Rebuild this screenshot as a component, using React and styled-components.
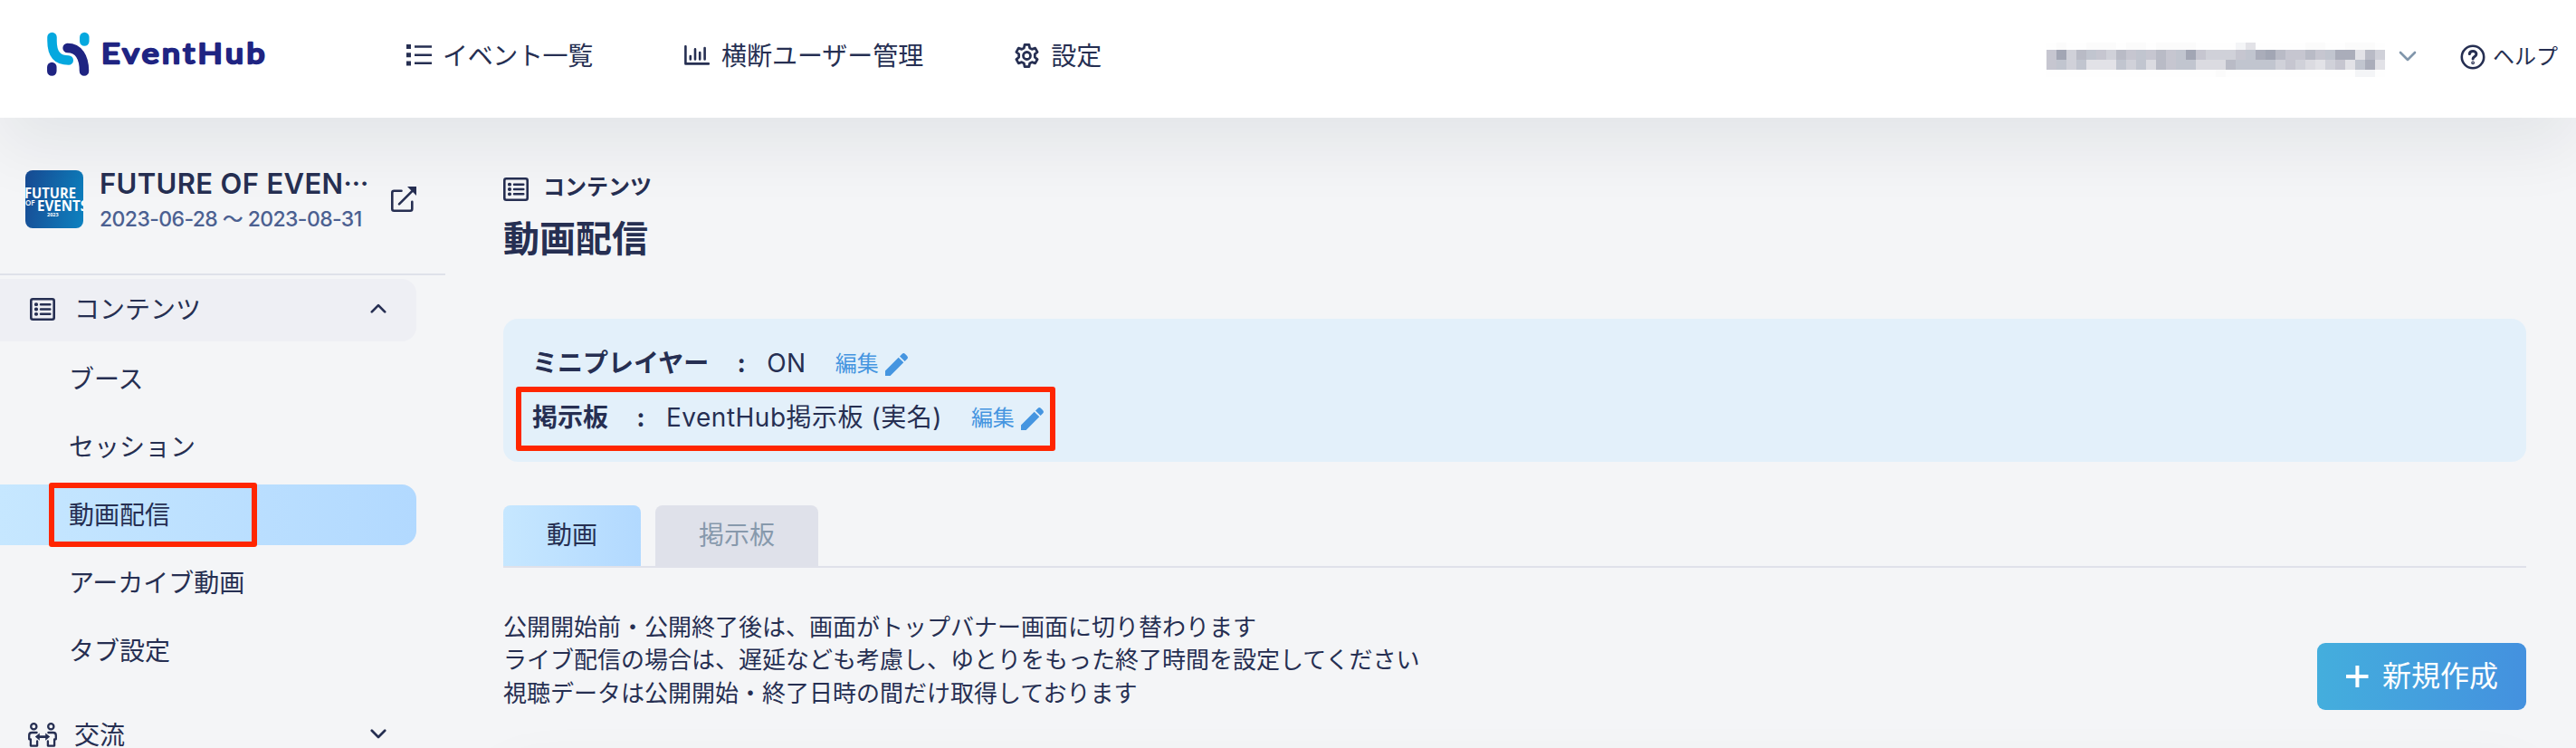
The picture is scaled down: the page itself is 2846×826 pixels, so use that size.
import React from "react";
import styled, { createGlobalStyle } from "styled-components";

const navy = "#262f52";
const line = "#dfe1ea";

const GlobalStyle = createGlobalStyle`
  *, *::before, *::after { box-sizing: border-box; }
  body {
    margin: 0;
    background: #f4f5f7;
    color: ${navy};
    font-family: Inter, "Noto Sans CJK JP", sans-serif;
    font-size: 28px;
    line-height: 1.4;
    overflow: hidden;
  }
  svg { display: block; flex: none; }
`;

const Page = styled.div`
  width: 100%;
  height: 826px;
  overflow: hidden;
`;

const Header = styled.header`
  position: relative;
  display: flex;
  align-items: center;
  height: 130px;
  padding: 0 20px 5px 52px;
  background: #fff;
  box-shadow: 0 32px 72px rgba(20, 24, 40, 0.07);
`;

const Nav = styled.nav`
  display: flex;
  align-items: center;
  margin-left: 152px;
`;

const NavItem = styled.a`
  display: flex;
  align-items: center;
  gap: ${(p) => p.$gap}px;
  margin-right: ${(p) => p.$after || 0}px;
  letter-spacing: ${(p) => p.$tracking || 0}px;
  white-space: nowrap;

  svg { margin-top: -3px; }
`;

const Account = styled.div`
  display: flex;
  align-items: center;
  gap: 16px;
  margin-left: auto;
`;

const Redacted = styled.div`
  margin: 7px -1px 0 0;
`;

const Help = styled.a`
  display: flex;
  align-items: center;
  gap: 8px;
  width: 108px;
  margin-left: 32px;
  font-size: 24px;
  white-space: nowrap;
`;

const Body = styled.div`
  display: flex;
`;

const Sidebar = styled.aside`
  width: 492px;
  flex: none;
`;

const EventCard = styled.div`
  display: flex;
  height: 174px;
  padding: 58px 32px 0 28px;
  border-bottom: 2px solid ${line};
`;

const Thumb = styled.div`
  width: 64px;
  height: 64px;
  border-radius: 8px;
  overflow: hidden;
  background: linear-gradient(100deg, #184a93, #0d82c0);
`;

const EventInfo = styled.div`
  width: 310px;
  margin-left: 18px;
  margin-right: 12px;
`;

const EventTitle = styled.div`
  font-size: 31px;
  font-weight: 600;
  line-height: 36px;
  margin-top: -3px;
  letter-spacing: 0.35px;
  white-space: nowrap;
`;

const Ellipsis = styled.span`
  font-size: 29px;
  line-height: 0;
  vertical-align: 9px;
`;

const EventDate = styled.div`
  margin-top: 5px;
  color: #4b6091;
  font-size: 23px;
  font-weight: 500;
  line-height: 32px;
  letter-spacing: -0.6px;
  white-space: nowrap;
`;

const OpenLink = styled.a`
  padding-top: 18px;
`;

const MenuGroup = styled.div`
  display: flex;
  align-items: center;
  width: 460px;
  height: 69px;
  margin-top: ${(p) => p.$top}px;
  padding: 0 33px 0 ${(p) => p.$left}px;
  border-radius: 0 16px 16px 0;
  background: ${(p) => (p.$open ? "#eeeff4" : "transparent")};

  svg { margin-top: -3px; }
`;

const MenuLabel = styled.span`
  flex: 1;
  margin-left: ${(p) => p.$gap}px;
  padding-top: 1px;
`;

const SubMenu = styled.div`
  display: flex;
  flex-direction: column;
  gap: 8px;
  padding-top: 8px;
`;

const SubItem = styled.a`
  position: relative;
  display: flex;
  align-items: center;
  width: 460px;
  height: 67px;
  padding: 3px 0 0 76px;
  border-radius: 0 16px 16px 0;
  background: ${(p) => (p.$active ? "linear-gradient(90deg, #c6e7ff, #b2d9ff)" : "none")};
`;

const Marker = styled.div`
  position: absolute;
  left: ${(p) => p.$x}px;
  top: ${(p) => p.$y}px;
  width: ${(p) => p.$w}px;
  height: ${(p) => p.$h}px;
  border: 6px solid #ff2600;
  border-radius: 3px;
`;

const Main = styled.main`
  flex: 1;
  padding: 58px 55px 0 64px;
`;

const Crumb = styled.div`
  display: flex;
  align-items: center;
  gap: 16px;
  height: 42px;
  font-size: 24px;
  font-weight: 600;
`;

const CrumbText = styled.span`
  margin-top: -4px;
`;

const PageTitle = styled.h1`
  margin: 6px 0 0;
  font-size: 40px;
  font-weight: 700;
  line-height: 56px;
`;

const Settings = styled.section`
  position: relative;
  height: 158px;
  margin-top: 60px;
  padding: 20px 32px 0;
  border-radius: 16px;
  background: #e3f0fa;
`;

const SettingRow = styled.div`
  display: flex;
  align-items: center;
  height: 60px;
  white-space: nowrap;
`;

const SettingName = styled.strong`
  font-weight: 700;
`;

const Colon = styled.strong`
  width: 64px;
  padding-left: 8px;
  text-align: center;
`;

const SettingValue = styled.span`
  letter-spacing: 0.5px;
`;

const EditLink = styled.a`
  display: flex;
  align-items: center;
  gap: 7px;
  margin-left: 32px;
  color: #4595e0;
  font-size: 24px;
`;

const Tabs = styled.div`
  display: flex;
  gap: 16px;
  margin-top: 48px;
  border-bottom: 2px solid ${line};
`;

const Tab = styled.a`
  display: flex;
  align-items: center;
  height: 67px;
  padding: 1px 48px 0;
  border-radius: 8px 8px 0 0;
  color: ${(p) => (p.$active ? navy : "#8799ac")};
  background: ${(p) => (p.$active ? "linear-gradient(90deg, #c6e7ff, #b2d9ff)" : line)};
`;

const Intro = styled.div`
  display: flex;
  justify-content: space-between;
  height: 110px;
  margin-top: 48px;
`;

const Note = styled.p`
  margin: 0;
  font-size: 26px;
  line-height: 36.4px;
`;

const CreateButton = styled.button`
  display: flex;
  align-items: center;
  gap: 15px;
  width: 231px;
  height: 74px;
  margin-top: 35px;
  padding: 0 0 0 32px;
  border: 0;
  border-radius: 9px;
  background: linear-gradient(90deg, #44aedd, #4491df);
  color: #fff;
  font: inherit;
  font-size: 32px;
  white-space: nowrap;
`;

const ListCard = styled.section`
  height: 200px;
  margin-top: 60px;
  border-radius: 16px;
  background: #fff;
  box-shadow: 0 16px 72px rgba(20, 24, 40, 0.07);
`;

const Logo = () => (
  <svg width="245" height="56" viewBox="0 0 245 56" fill="none">
    <g strokeWidth="10.5" strokeLinecap="round">
      <path d="M5.5 6V10C5.5 25.5 12 31.5 23.8 31.5" stroke="#05a8df" />
      <path d="M41.3 6V10.5" stroke="#05a8df" />
      <path d="M22.6 18C34.5 18 41 28 41 43.5" stroke="#1f2482" />
      <path d="M5.3 39V43.5" stroke="#1f2482" />
    </g>
    <text
      x="60"
      y="35.4"
      fontFamily="Lato, sans-serif"
      fontSize="30.5"
      fontWeight="400"
      letterSpacing="3"
      textLength="184"
      lengthAdjust="spacingAndGlyphs"
      fill="#1f2482"
      stroke="#1f2482"
      strokeWidth="2.5"
      strokeLinejoin="round"
    >
      EventHub
    </text>
  </svg>
);

const ListIcon = () => (
  <svg width="28" height="24" viewBox="0 0 28 24" fill={navy}>
    <path d="M0 0h5v5H0zM0 9.2h5v5H0zM0 18.4h5v5H0zM9 1.2h19v2.6H9zM9 10.4h19V13H9zM9 19.4h19V22H9z" />
  </svg>
);

const ChartIcon = () => (
  <svg width="28" height="22" viewBox="0 0 28 22" fill="none" stroke={navy} strokeWidth="2.6" strokeLinecap="round">
    <path d="M1.4 1.2V20.4H27" strokeLinejoin="round" />
    <path d="M6.8 12v3.5M12 4.4v11M17.2 8v7.5M22.6 3v12.5" />
  </svg>
);

const GearIcon = () => (
  <svg width="29" height="29" viewBox="0 0 24 24" fill="none" stroke={navy} strokeWidth="2.3" strokeLinejoin="round">
    <path d="M10 1.9h4l.6 3 2.1 1.2 2.9-1 2 3.5-2.3 2v2.8l2.3 2-2 3.5-2.9-1-2.1 1.2-.6 3h-4l-.6-3-2.1-1.2-2.9 1-2-3.5 2.3-2v-2.8l-2.3-2 2-3.5 2.9 1 2.1-1.2z" />
    <circle cx="12" cy="12" r="3.3" />
  </svg>
);

const HelpIcon = () => (
  <svg width="28" height="28" viewBox="0 0 28 28" fill="none" stroke={navy} strokeWidth="2.6" strokeLinecap="round">
    <circle cx="14" cy="14" r="12.2" />
    <path d="M10.3 10.6c.4-2 1.9-3 3.8-3 2.1 0 3.8 1.3 3.8 3.2 0 2.6-3.8 2.8-3.8 5.2" strokeWidth="3" />
    <circle cx="14.1" cy="20.3" r="0.6" />
  </svg>
);

const Chevron = ({ up, w = 18, color = navy, stroke = 3 }) => (
  <svg width={w} height={w * 0.62} viewBox="0 0 20 12.4" fill="none" stroke={color} strokeWidth={stroke} strokeLinecap="round" strokeLinejoin="round">
    <path d={up ? "M2 10.4L10 2.4L18 10.4" : "M2 2L10 10L18 2"} />
  </svg>
);

const ContentsIcon = ({ h = 26 }) => (
  <svg width="28" height={h} viewBox={`0 0 28 ${h}`} fill="none" stroke={navy} strokeWidth="2.6" strokeLinecap="round">
    <rect x="1.3" y="1.3" width="25.4" height={h - 2.6} rx="2" />
    <path d={`M12 ${h / 2 - 5.3}h10.3M12 ${h / 2}h10.3M12 ${h / 2 + 5.3}h10.3`} strokeWidth="2.5" />
    <path d={`M6.8 ${h / 2 - 5.3}h.4M6.8 ${h / 2}h.4M6.8 ${h / 2 + 5.3}h.4`} strokeWidth="3.8" />
  </svg>
);

const OpenIcon = () => (
  <svg width="28" height="28" viewBox="0 0 28 28" fill="none" stroke={navy} strokeWidth="2.6" strokeLinecap="round" strokeLinejoin="round">
    <path d="M11.5 4.7H3.3a2 2 0 0 0-2 2v18a2 2 0 0 0 2 2h18a2 2 0 0 0 2-2v-8" />
    <path d="M9 19.3L24 4.3" />
    <path d="M18 0h10v10l-3.2-3.2-3.6-3.6z" fill={navy} stroke="none" />
  </svg>
);

const PeopleIcon = () => (
  <svg width="32" height="27" viewBox="0 0 32 27" fill="none" stroke={navy} strokeWidth="2.3" strokeLinejoin="round" strokeLinecap="round">
    <circle cx="6.3" cy="4.3" r="3.1" />
    <circle cx="25.3" cy="4.3" r="3.1" />
    <path d="M9.6 11H4.2C2.2 11 1.2 12.2 1.2 14v4.3h1.7v7.3h7.2v-5.2" />
    <path d="M22.4 11h5.4c2 0 3 1.2 3 3v4.3h-1.7v7.3h-7.2v-5.2" />
    <path d="M11 15.6h10" strokeWidth="2.6" />
    <path d="M12.8 11.4v8.4l-5-4.2zM19.2 11.4v8.4l5-4.2z" fill={navy} stroke="none" />
  </svg>
);

const PencilIcon = () => (
  <svg width="25" height="25" viewBox="0 0 25 25" fill="#4595e0">
    <path d="M0 25v-5.6L14.7 4.7l5.6 5.6L5.6 25zM16 3.4l2.5-2.5a2.6 2.6 0 0 1 3.6 0l2 2a2.6 2.6 0 0 1 0 3.6L21.6 9z" />
  </svg>
);

const PlusIcon = () => (
  <svg width="25" height="24" viewBox="0 0 25 24" fill="#fff">
    <path d="M10.4 0h4v10h10.1v4H14.4v10h-4V14H0v-4h10.4z" />
  </svg>
);

const ThumbArt = () => (
  <svg width="64" height="64" viewBox="0 0 64 64" fill="#fff" fontFamily="Open Sans, sans-serif" fontWeight="700">
    <text x="-1" y="31" fontSize="16.5" textLength="57" lengthAdjust="spacingAndGlyphs">FUTURE</text>
    <text x="0" y="39" fontSize="8" fontWeight="600">OF</text>
    <text x="13" y="45" fontSize="16" textLength="56" lengthAdjust="spacingAndGlyphs">EVENTS</text>
    <text x="24" y="51" fontSize="5.5">2023</text>
  </svg>
);

// Pixelated account address: one character per cell, looked up in shades.
const mosaicRows = [
  { y: 0, h: 8, cells: "0100111011011110000230000011001110" },
  { y: 8, h: 11, cells: "6a587658676867a6555679a866867995783".slice(0, 31) + "385" },
  { y: 19, h: 11, cells: "6757333757486774448777756543563679".slice(0, 31) + "793" },
  { y: 30, h: 8, cells: "0000000000000000010000000000000220" },
];
const shades = { 0: "#fefefe", 1: "#fbfbfb", 2: "#f4f5f7", 3: "#e2e2e7", 4: "#dbdbe1", 5: "#d0d1d9", 6: "#c6c6d0", 7: "#c1c5cf", 8: "#b9bbc6", 9: "#aaadba", a: "#a2a6b4" };

const Mosaic = () => (
  <svg width="374" height="38" viewBox="0 0 374 38" shapeRendering="crispEdges">
    {mosaicRows.map((row) =>
      [...row.cells].map((c, i) => (
        <rect key={`${row.y}-${i}`} x={i * 11} y={row.y} width="11" height={row.h} fill={shades[c]} />
      ))
    )}
  </svg>
);

const SUB_ITEMS = ["ブース", "セッション", "動画配信", "アーカイブ動画", "タブ設定"];

export default function App() {
  return (
    <Page>
      <GlobalStyle />
      <Header>
        <Logo />
        <Nav>
          <NavItem $gap={12} $after={101} $tracking={-0.35}><ListIcon />イベント一覧</NavItem>
          <NavItem $gap={13} $after={100}><ChartIcon />横断ユーザー管理</NavItem>
          <NavItem $gap={12}><GearIcon />設定</NavItem>
        </Nav>
        <Account>
          <Redacted><Mosaic /></Redacted>
          <Chevron w={20} color="#8196ab" stroke={2.6} />
          <Help><HelpIcon />ヘルプ</Help>
        </Account>
      </Header>
      <Body>
        <Sidebar>
          <EventCard>
            <Thumb><ThumbArt /></Thumb>
            <EventInfo>
              <EventTitle>FUTURE OF EVEN<Ellipsis>…</Ellipsis></EventTitle>
              <EventDate>2023-06-28 〜 2023-08-31</EventDate>
            </EventInfo>
            <OpenLink><OpenIcon /></OpenLink>
          </EventCard>
          <MenuGroup $open $top={4} $left={33}>
            <ContentsIcon h={25} />
            <MenuLabel $gap={21}>コンテンツ</MenuLabel>
            <Chevron up />
          </MenuGroup>
          <SubMenu>
            {SUB_ITEMS.map((label) => (
              <SubItem key={label} $active={label === "動画配信"}>
                {label}
                {label === "動画配信" && <Marker $x={54} $y={-2} $w={230} $h={71} />}
              </SubItem>
            ))}
          </SubMenu>
          <MenuGroup $top={26} $left={31}>
            <PeopleIcon />
            <MenuLabel $gap={19}>交流</MenuLabel>
            <Chevron />
          </MenuGroup>
        </Sidebar>
        <Main>
          <Crumb><ContentsIcon h={26} /><CrumbText>コンテンツ</CrumbText></Crumb>
          <PageTitle>動画配信</PageTitle>
          <Settings>
            <SettingRow>
              <SettingName>ミニプレイヤー</SettingName>
              <Colon>:</Colon>
              <SettingValue>ON</SettingValue>
              <EditLink>編集<PencilIcon /></EditLink>
            </SettingRow>
            <SettingRow>
              <SettingName>掲示板</SettingName>
              <Colon>:</Colon>
              <SettingValue>EventHub掲示板 (実名)</SettingValue>
              <EditLink>編集<PencilIcon /></EditLink>
            </SettingRow>
            <Marker $x={14} $y={75} $w={596} $h={71} />
          </Settings>
          <Tabs>
            <Tab $active>動画</Tab>
            <Tab>掲示板</Tab>
          </Tabs>
          <Intro>
            <Note>
              公開開始前・公開終了後は、画面がトップバナー画面に切り替わります<br />
              ライブ配信の場合は、遅延なども考慮し、ゆとりをもった終了時間を設定してください<br />
              視聴データは公開開始・終了日時の間だけ取得しております
            </Note>
            <CreateButton><PlusIcon />新規作成</CreateButton>
          </Intro>
          <ListCard />
        </Main>
      </Body>
    </Page>
  );
}
